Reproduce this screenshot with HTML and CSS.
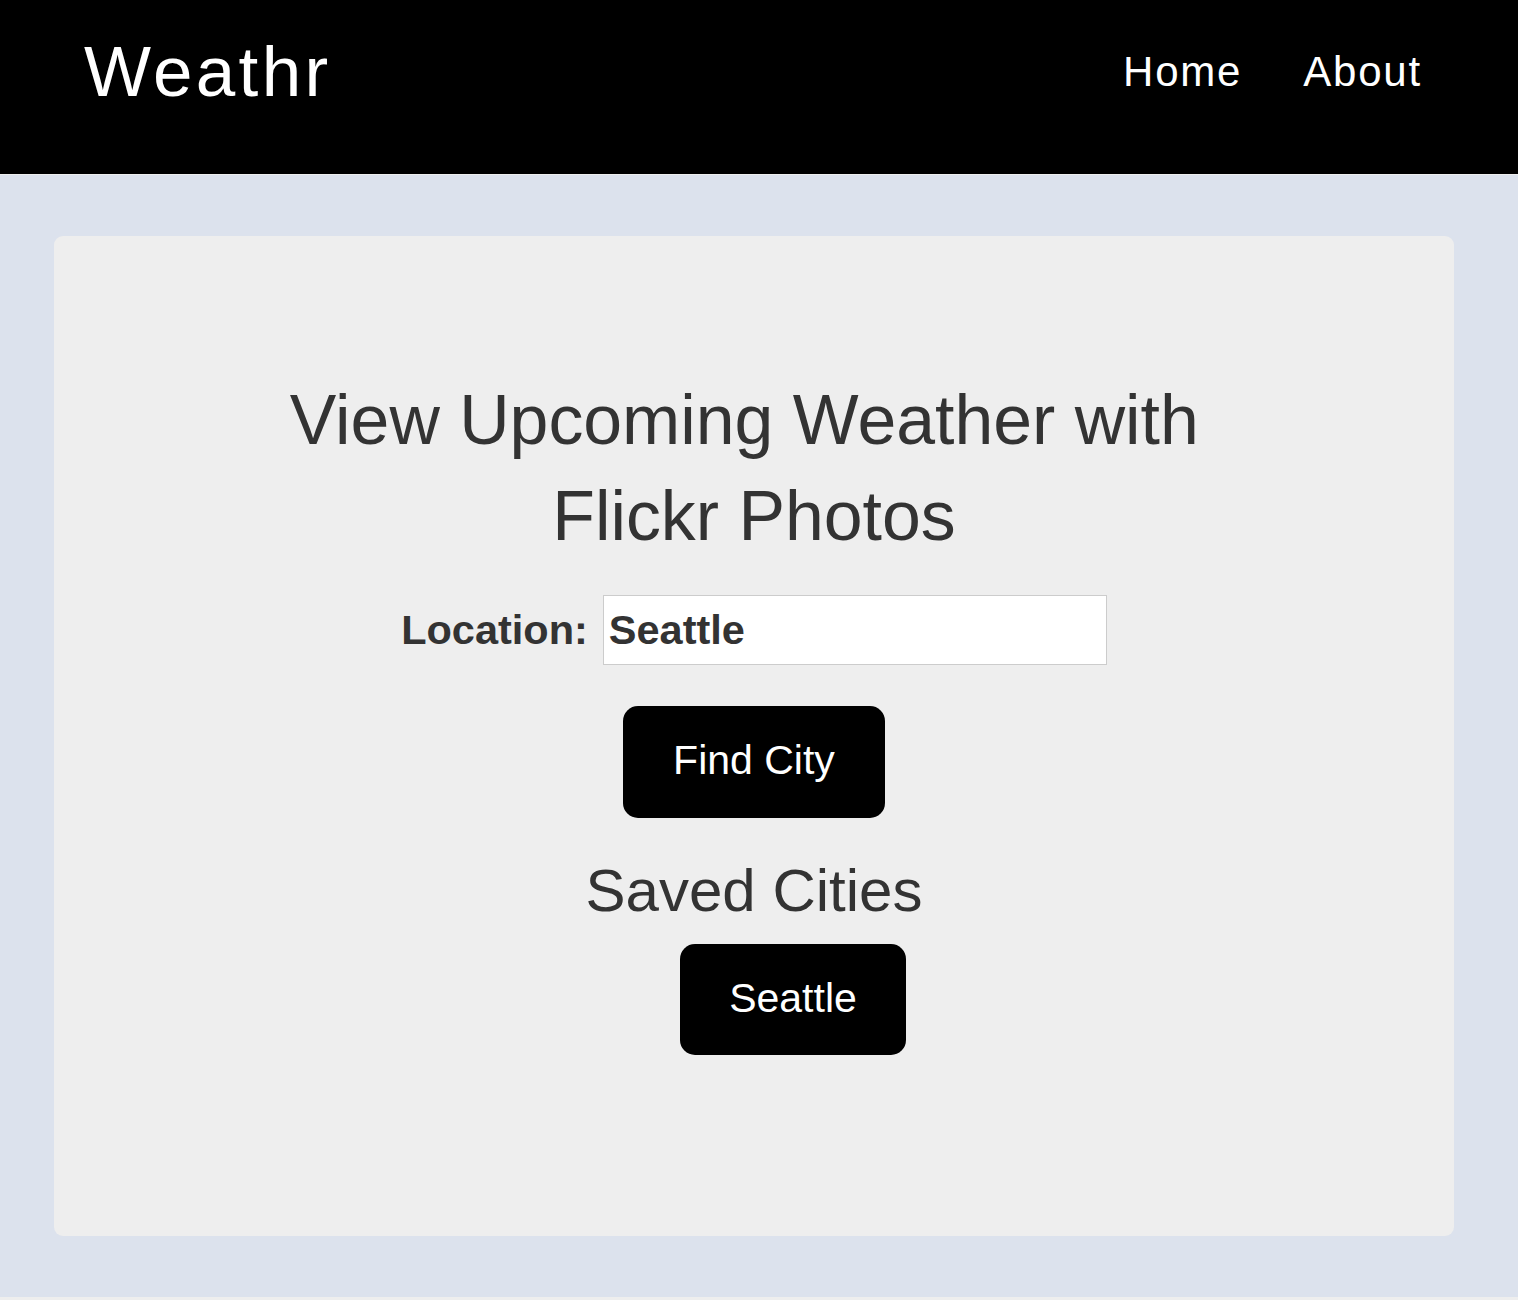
FILE: index.html
```html
<!DOCTYPE html>
<html lang="en">
<head>
<meta charset="utf-8">
<title>Weathr</title>
<link rel="stylesheet" href="styles.css">
</head>
<body>
<header class="topbar">
  <div class="logo">Weathr</div>
  <nav class="nav">
    <a class="nav-link" href="#">Home</a>
    <a class="nav-link" href="#">About</a>
  </nav>
</header>
<main class="page">
  <section class="card">
    <h1 class="title">View Upcoming Weather with&nbsp;<br>Flickr Photos</h1>
    <form class="search">
      <label class="search-label" for="loc">Location:</label>
      <input class="search-input" id="loc" type="text" value="Seattle">
    </form>
    <button class="btn find-btn" type="button">Find City</button>
    <h2 class="saved-title">Saved Cities</h2>
    <ul class="saved-list">
      <li><button class="btn city-btn" type="button">Seattle</button></li>
    </ul>
  </section>
</main>
</body>
</html>
```
FILE: styles.css
```css
html, body {
  margin: 0;
  padding: 0;
  background: #eeeeee;
  font-family: "Liberation Sans", Arial, Helvetica, sans-serif;
}

.topbar {
  height: 174px;
  box-sizing: border-box;
  background: #000;
  display: flex;
  justify-content: space-between;
  align-items: flex-start;
  padding: 36px 96px 0 84px;
}

.logo {
  color: #fff;
  font-size: 71px;
  line-height: 71px;
  letter-spacing: 3.3px;
}

.nav {
  display: flex;
  gap: 61px;
  margin-top: 14.5px;
}

.nav-link {
  color: #fff;
  text-decoration: none;
  font-size: 42px;
  line-height: 42px;
  letter-spacing: 1.8px;
}

.page {
  margin-top: 1px;
  height: 1122px;
  box-sizing: border-box;
  background: #dce2ed;
  padding: 61px 64px 0 54px;
}

.card {
  width: 1400px;
  height: 1000px;
  box-sizing: border-box;
  background: #eeeeee;
  border-radius: 9px;
  padding-top: 136px;
  display: flex;
  flex-direction: column;
  align-items: center;
  color: #333333;
}

.title {
  margin: 0;
  font-weight: 400;
  font-size: 69.8px;
  line-height: 96px;
  text-align: center;
}

.search {
  margin: 31px 0 0;
  display: flex;
  align-items: center;
  gap: 15px;
}

.search-label {
  font-weight: 700;
  font-size: 41.5px;
}

.search-input {
  width: 504px;
  height: 70px;
  box-sizing: border-box;
  border: 1px solid #cccccc;
  background: #fff;
  padding: 0 5px;
  margin: 0;
  font-family: "Liberation Sans", Arial, Helvetica, sans-serif;
  font-weight: 700;
  font-size: 41.5px;
  color: #333333;
  outline: none;
}

.btn {
  background: #000;
  color: #fff;
  border: none;
  border-radius: 15px;
  font-family: "Liberation Sans", Arial, Helvetica, sans-serif;
  font-size: 41px;
  line-height: 48px;
  padding: 30px 50px 34px;
  margin: 0;
  cursor: pointer;
}

.find-btn {
  margin-top: 41px;
}

.saved-title {
  margin: 37px 0 0;
  font-weight: 400;
  font-size: 60px;
  line-height: 72px;
}

.saved-list {
  list-style: none;
  margin: 17px 0 0;
  padding: 0 0 0 78px;
}

.city-btn {
  padding: 30px 49px 33px;
}
```
